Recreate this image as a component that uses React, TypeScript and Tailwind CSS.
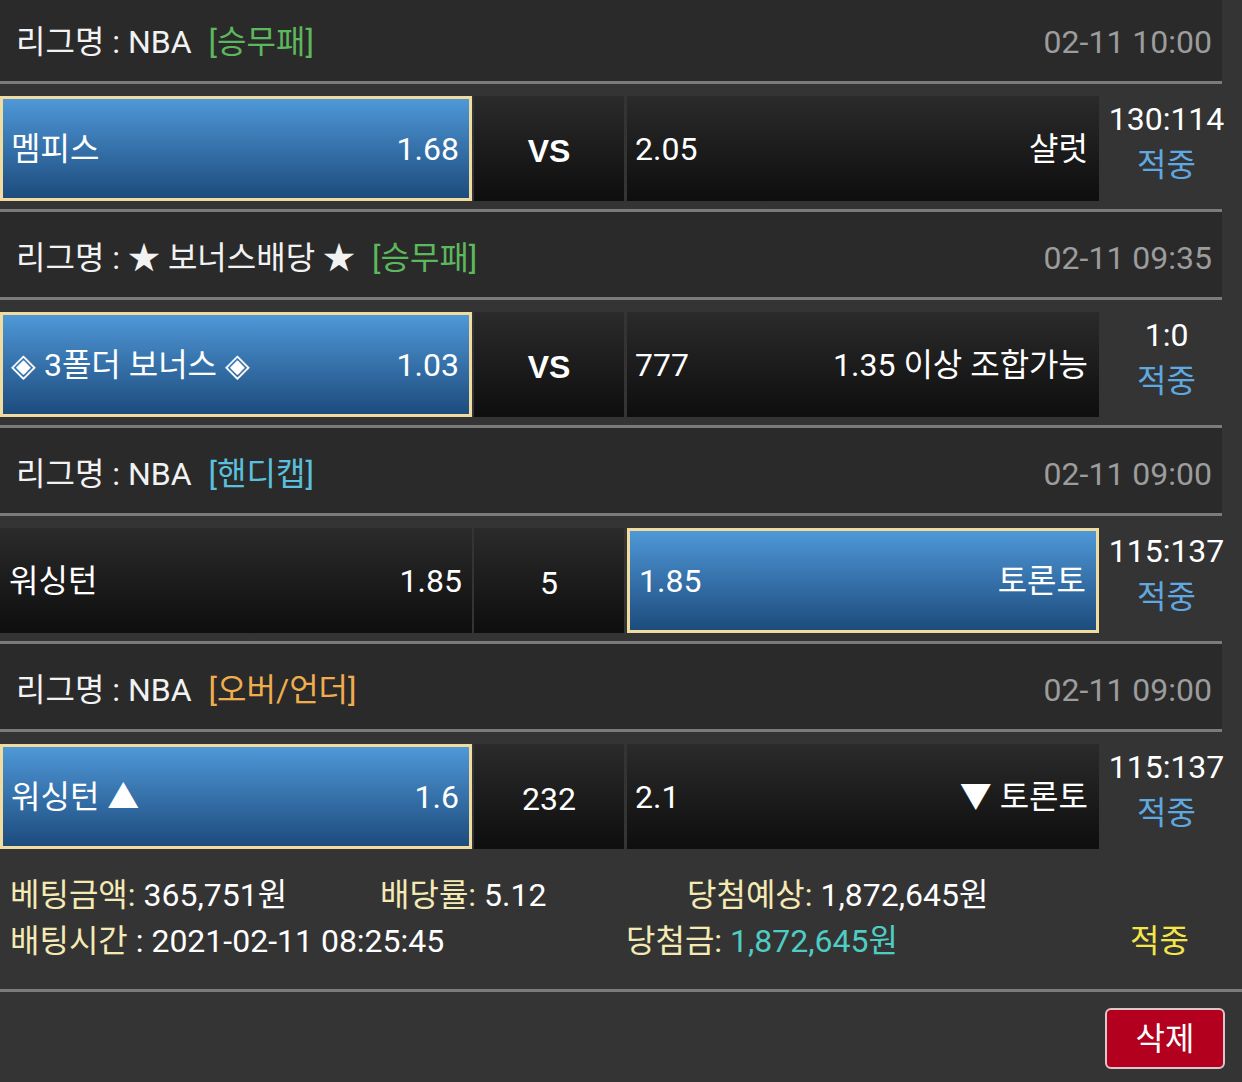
import React from "react";

type MatchProps = {
  home: React.ReactNode;
  homeOdds: string;
  mid: string;
  midBold?: boolean;
  awayOdds: string;
  away: React.ReactNode;
  score: string;
  sel: "home" | "away";
  last?: boolean;
};

function Header({
  title,
  tag,
  tagColor,
  date,
  first,
}: {
  title: string;
  tag: string;
  tagColor: string;
  date: string;
  first?: boolean;
}) {
  return (
    <div className="w-[1222px]">
      <div
        className={`${first ? "h-[81px] pt-[3px]" : "h-[85px] pt-[7px]"} bg-[#2a2a2a] flex items-center justify-between pl-[16px] pr-[10px]`}
      >
        <div className="text-[#f2f2f2] whitespace-pre">
          {title}
          <span className={`ml-[17px] ${tagColor}`}>{tag}</span>
        </div>
        <div className="text-[#9c9c9c]">{date}</div>
      </div>
      <div className="h-[3px] bg-[#7b7b7b]" />
    </div>
  );
}

function Cell({
  selected,
  left,
  right,
  width,
  padL,
  padR,
}: {
  selected: boolean;
  left: React.ReactNode;
  right: React.ReactNode;
  width: string;
  padL: string;
  padR: string;
}) {
  if (selected) {
    return (
      <div
        className={`${width} h-full border-[3px] border-[#f1dc9f] bg-linear-to-b from-[#4f98d8] to-[#1d4c7e] flex items-center justify-between ${padL} ${padR} text-white`}
      >
        <span className="whitespace-pre">{left}</span>
        <span className="whitespace-pre">{right}</span>
      </div>
    );
  }
  return (
    <div
      className={`${width} h-full bg-linear-to-b from-[#2b2b2b] to-[#0e0e0e] flex items-center justify-between ${padL} ${padR} text-white`}
    >
      <span className="whitespace-pre">{left}</span>
      <span className="whitespace-pre">{right}</span>
    </div>
  );
}

function Match({ home, homeOdds, mid, midBold, awayOdds, away, score, sel, last }: MatchProps) {
  return (
    <div className="w-[1242px]">
      <div className="h-[125px] pt-[12px] flex items-start">
        <div className="h-[105px] flex">
          <Cell
            selected={sel === "home"}
            left={home}
            right={homeOdds}
            width="w-[472px]"
            padL={sel === "home" ? "pl-[8px]" : "pl-[9px]"}
            padR={sel === "home" ? "pr-[10px]" : "pr-[10px]"}
          />
          <div className="ml-[2px] w-[150px] h-full bg-linear-to-b from-[#2b2b2b] to-[#0e0e0e] flex items-center justify-center text-white pt-[4px]">
            <span className={midBold ? "font-bold font-['Liberation_Sans',Arial,sans-serif] text-[32px]" : ""}>{mid}</span>
          </div>
          <div className="ml-[3px]">
            <Cell
              selected={sel === "away"}
              left={awayOdds}
              right={away}
              width="w-[472px]"
              padL={sel === "away" ? "pl-[9px]" : "pl-[8px]"}
              padR={sel === "away" ? "pr-[10px]" : "pr-[11px]"}
            />
          </div>
        </div>
        <div className="w-[135px] flex flex-col items-center leading-[46px]">
          <span className="text-white">{score}</span>
          <span className="text-[#5fa8e0]">적중</span>
        </div>
      </div>
      {!last && <div className="w-[1222px] h-[3px] bg-[#7b7b7b]" />}
    </div>
  );
}

export default function App() {
  return (
    <div className="w-[1242px] h-[1082px] overflow-hidden bg-[#343434] font-['Roboto','Noto_Sans_CJK_KR',sans-serif] text-[32px] leading-none">
      <Header title="리그명 : NBA" tag="[승무패]" tagColor="text-[#5cb85c]" date="02-11 10:00" first />
      <Match home="멤피스" homeOdds="1.68" mid="VS" midBold awayOdds="2.05" away="샬럿" score="130:114" sel="home" />
      <Header title="리그명 : ★ 보너스배당 ★" tag="[승무패]" tagColor="text-[#5cb85c]" date="02-11 09:35" />
      <Match
        home="◈ 3폴더 보너스 ◈"
        homeOdds="1.03"
        mid="VS"
        midBold
        awayOdds="777"
        away="1.35 이상 조합가능"
        score="1:0"
        sel="home"
      />
      <Header title="리그명 : NBA" tag="[핸디캡]" tagColor="text-[#5bc0de]" date="02-11 09:00" />
      <Match home="워싱턴" homeOdds="1.85" mid="5" awayOdds="1.85" away="토론토" score="115:137" sel="away" />
      <Header title="리그명 : NBA" tag="[오버/언더]" tagColor="text-[#f0ad4e]" date="02-11 09:00" />
      <Match home="워싱턴 ▲" homeOdds="1.6" mid="232" awayOdds="2.1" away="▼ 토론토" score="115:137" sel="home" last />

      <div className="pt-[15px] pb-[25px] leading-[46px]">
        <div className="flex">
          <div className="pl-[10px] w-[380px] whitespace-pre">
            <span className="text-[#f4eab4]">베팅금액:</span>
            <span className="text-white"> 365,751원</span>
          </div>
          <div className="w-[307px] whitespace-pre">
            <span className="text-[#f4eab4]">배당률:</span>
            <span className="text-white"> 5.12</span>
          </div>
          <div className="whitespace-pre">
            <span className="text-[#f4eab4]">당첨예상:</span>
            <span className="text-white"> 1,872,645원</span>
          </div>
        </div>
        <div className="flex">
          <div className="pl-[10px] w-[626px] whitespace-pre">
            <span className="text-[#f4eab4]">배팅시간</span>
            <span className="text-white"> : 2021-02-11 08:25:45</span>
          </div>
          <div className="w-[504px] whitespace-pre">
            <span className="text-[#f4eab4]">당첨금:</span>
            <span className="text-[#4ecdc4]"> 1,872,645원</span>
          </div>
          <div className="text-[#f3e54a]">적중</div>
        </div>
      </div>
      <div className="h-[3px] bg-[#7b7b7b]" />
      <div className="flex justify-end pr-[17px] pt-[16px]">
        <button className="w-[120px] h-[61px] rounded-[6px] border-[2px] border-[#dcc6c8] bg-[#b3001e] text-white flex items-center justify-center">
          삭제
        </button>
      </div>
    </div>
  );
}
